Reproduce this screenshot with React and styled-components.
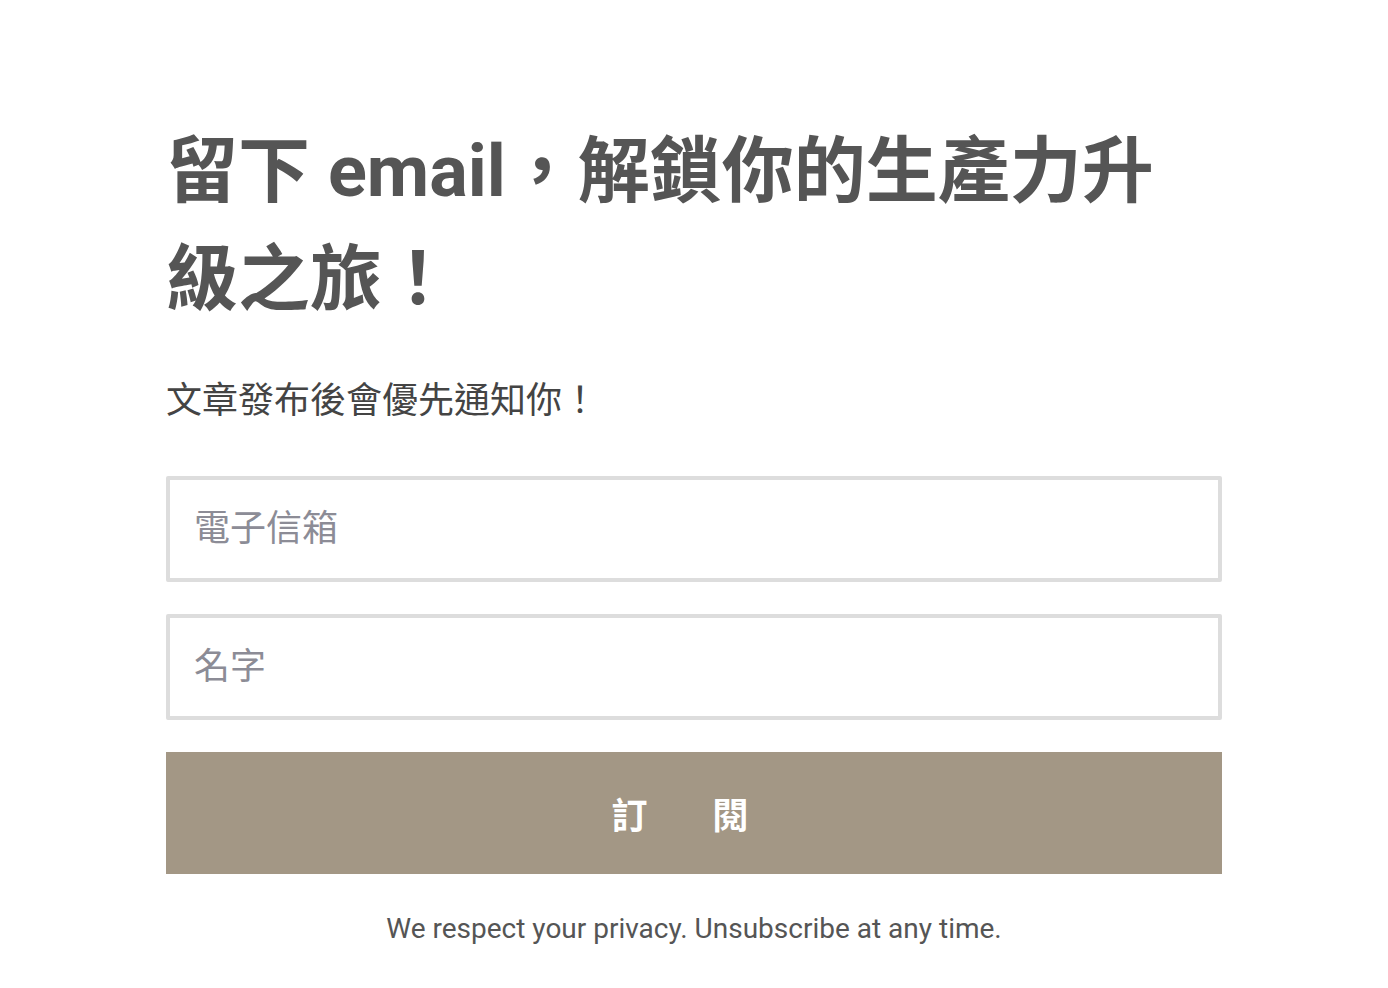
import React from "react";
import styled, { createGlobalStyle } from "styled-components";

const GlobalStyle = createGlobalStyle`
    body {
        margin: 0;
        background: #ffffff;
        font-family: Roboto, "Noto Sans CJK TC", sans-serif;
    }
`;

const Wrapper = styled.div`
    width: 1056px;
    margin: 0 auto;
    padding-top: 118px;
    box-sizing: border-box;
`;

const Title = styled.h1`
    margin: 0;
    font-family: Roboto, "Noto Sans CJK TC", sans-serif;
    font-size: 72px;
    line-height: 108px;
    font-weight: 700;
    color: #555555;
`;

const Subtitle = styled.p`
    margin: 40px 0 0 0;
    font-family: Roboto, "Noto Sans CJK TC", sans-serif;
    font-size: 36px;
    line-height: 54px;
    color: #444444;
`;

const Form = styled.form`
    margin-top: 48px;
    display: flex;
    flex-direction: column;
    gap: 32px;
`;

const Field = styled.input`
    width: 100%;
    height: 106px;
    box-sizing: border-box;
    border: 4px solid #dddddd;
    border-radius: 2px;
    padding: 0 24px;
    font-family: Roboto, "Noto Sans CJK TC", sans-serif;
    font-size: 36px;
    color: #333333;
    background: #ffffff;
    outline: none;

    &::placeholder {
        color: #8c8c96;
    }
`;

const SubmitButton = styled.button`
    width: 100%;
    height: 122px;
    border: none;
    background-color: #a39785;
    color: #ffffff;
    font-family: Roboto, "Noto Sans CJK TC", sans-serif;
    font-size: 36px;
    font-weight: 700;
    letter-spacing: 28px;
    padding: 0;
    cursor: pointer;
`;

const Note = styled.p`
    margin: 34px 0 0 0;
    text-align: center;
    font-family: Roboto, "Noto Sans", sans-serif;
    font-size: 28px;
    line-height: 42px;
    color: #555555;
`;

const App = () => {
    return (
        <>
            <GlobalStyle />
            <Wrapper>
                <Title>留下 email，解鎖你的生產力升級之旅！</Title>
                <Subtitle>文章發布後會優先通知你！</Subtitle>
                <Form onSubmit={(e) => e.preventDefault()}>
                    <Field type="email" placeholder="電子信箱" />
                    <Field type="text" placeholder="名字" />
                    <SubmitButton type="submit">訂 閱</SubmitButton>
                </Form>
                <Note>We respect your privacy. Unsubscribe at any time.</Note>
            </Wrapper>
        </>
    );
};

export default App;
